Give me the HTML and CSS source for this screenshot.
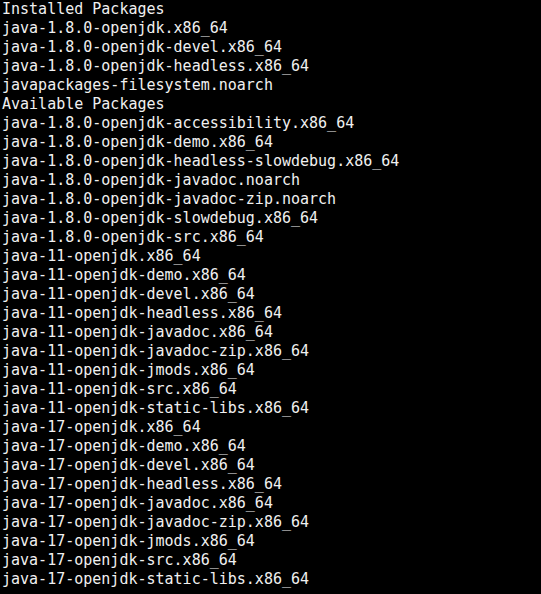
FILE: index.html
```html
<!DOCTYPE html>
<html>
<head>
<meta charset="utf-8">
<link rel="stylesheet" href="styles.css">
</head>
<body>
<pre class="term">Installed Packages
java-1.8.0-openjdk.x86_64
java-1.8.0-openjdk-devel.x86_64
java-1.8.0-openjdk-headless.x86_64
javapackages-filesystem.noarch
Available Packages
java-1.8.0-openjdk-accessibility.x86_64
java-1.8.0-openjdk-demo.x86_64
java-1.8.0-openjdk-headless-slowdebug.x86_64
java-1.8.0-openjdk-javadoc.noarch
java-1.8.0-openjdk-javadoc-zip.noarch
java-1.8.0-openjdk-slowdebug.x86_64
java-1.8.0-openjdk-src.x86_64
java-11-openjdk.x86_64
java-11-openjdk-demo.x86_64
java-11-openjdk-devel.x86_64
java-11-openjdk-headless.x86_64
java-11-openjdk-javadoc.x86_64
java-11-openjdk-javadoc-zip.x86_64
java-11-openjdk-jmods.x86_64
java-11-openjdk-src.x86_64
java-11-openjdk-static-libs.x86_64
java-17-openjdk.x86_64
java-17-openjdk-demo.x86_64
java-17-openjdk-devel.x86_64
java-17-openjdk-headless.x86_64
java-17-openjdk-javadoc.x86_64
java-17-openjdk-javadoc-zip.x86_64
java-17-openjdk-jmods.x86_64
java-17-openjdk-src.x86_64
java-17-openjdk-static-libs.x86_64</pre>
</body>
</html>
```
FILE: styles.css
```css
html, body {
  margin: 0;
  padding: 0;
  background: #000;
  height: 100%;
  overflow: hidden;
}
.term {
  margin: 0;
  padding: 0 0 0 2px;
  font-family: "DejaVu Sans Mono", monospace;
  font-size: 15px;
  line-height: 19px;
  color: #f0f0f0;
  white-space: pre;
}
```
